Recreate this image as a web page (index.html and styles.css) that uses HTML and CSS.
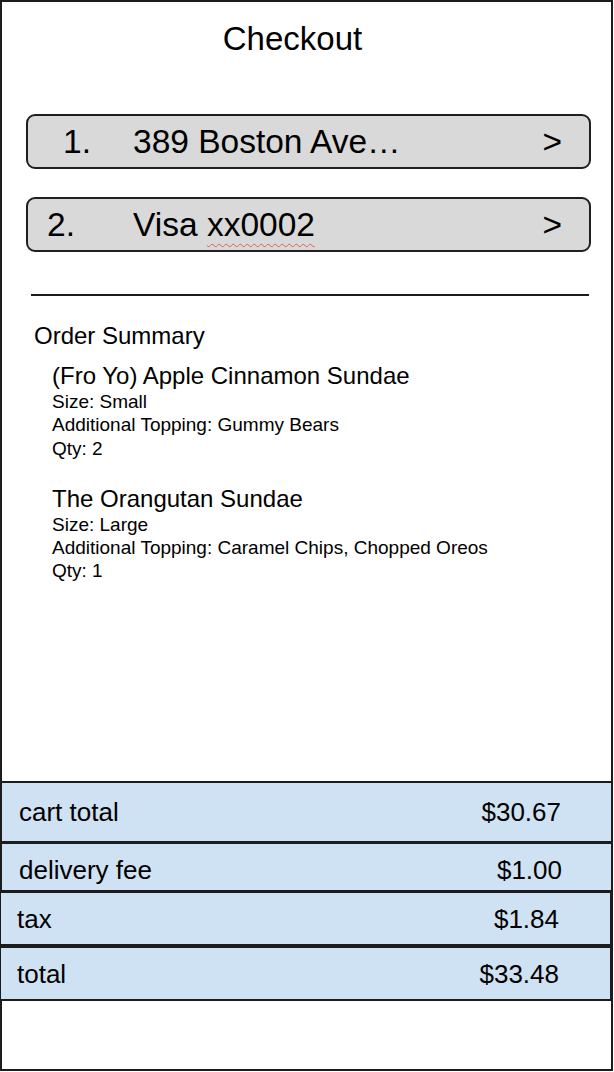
FILE: index.html
```html
<!DOCTYPE html>
<html lang="en">
<head>
<meta charset="utf-8">
<title>Checkout</title>
<link rel="stylesheet" href="styles.css">
</head>
<body>
<div class="frame">
  <h1 class="title">Checkout</h1>

  <div class="opt">
    <span class="num">1.</span>
    <span class="label">389 Boston Ave…</span>
    <span class="chev">&gt;</span>
  </div>
  <div class="opt opt-second">
    <span class="num num-alt">2.</span>
    <span class="label">Visa <span class="spell">xx0002</span></span>
    <span class="chev">&gt;</span>
  </div>

  <div class="rule"></div>

  <div class="summary-head">Order Summary</div>

  <div class="item">
    <div class="item-name">(Fro Yo) Apple Cinnamon Sundae</div>
    <div class="item-line">Size: Small</div>
    <div class="item-line">Additional Topping: Gummy Bears</div>
    <div class="item-line">Qty: 2</div>
  </div>
  <div class="item item-next">
    <div class="item-name">The Orangutan Sundae</div>
    <div class="item-line">Size: Large</div>
    <div class="item-line">Additional Topping: Caramel Chips, Chopped Oreos</div>
    <div class="item-line">Qty: 1</div>
  </div>

  <div class="totals">
    <div class="row row-cart"><span>cart total</span><span>$30.67</span></div>
    <div class="row row-fee"><span>delivery fee</span><span>$1.00</span></div>
    <div class="row row-tax"><span>tax</span><span>$1.84</span></div>
    <div class="row row-total"><span>total</span><span>$33.48</span></div>
  </div>
</div>
</body>
</html>
```

FILE: styles.css
```css
html, body {
  margin: 0;
  padding: 0;
  background: #ffffff;
}

body {
  font-family: "Liberation Sans", Arial, sans-serif;
  color: #000;
}

.frame {
  box-sizing: border-box;
  width: 613px;
  height: 1071px;
  border: 2px solid #1c1c1c;
  display: flex;
  flex-direction: column;
}

.title {
  margin: 17px 0 0 0;
  padding-right: 28px;
  font-weight: normal;
  font-size: 33px;
  line-height: 40px;
  text-align: center;
}

.opt {
  box-sizing: border-box;
  margin: 55px 20px 0 24px;
  height: 55px;
  border: 2px solid #1f1f1f;
  border-radius: 9px;
  background: #d9d9d9;
  display: flex;
  align-items: center;
  font-size: 33.5px;
  line-height: 38px;
}

.opt-second {
  margin-top: 28px;
}

.num {
  box-sizing: border-box;
  width: 105px;
  padding-left: 35px;
  flex: none;
}

.num-alt {
  padding-left: 19px;
}

.label {
  flex: 1;
  white-space: nowrap;
}

.spell {
  text-decoration: underline wavy #e25b5b;
  text-decoration-thickness: 1px;
  text-underline-offset: 7px;
}

.chev {
  flex: none;
  margin-right: 27px;
}

.rule {
  margin: 42px 22px 0 29px;
  height: 2px;
  background: #1c1c1c;
}

.summary-head {
  margin: 26px 0 0 32px;
  font-size: 24px;
  line-height: 28px;
}

.item {
  margin: 12px 0 0 50px;
}

.item-next {
  margin-top: 25px;
}

.item-name {
  font-size: 24px;
  line-height: 28px;
}

.item-line {
  font-size: 19px;
  line-height: 23.3px;
}

.totals {
  margin: auto -2px 68px -2px;
  display: flex;
  flex-direction: column;
}

.row {
  box-sizing: border-box;
  display: flex;
  justify-content: space-between;
  align-items: center;
  background: #cfe2f3;
  border: 2px solid #1c1c1c;
  font-size: 26px;
  line-height: 30px;
  padding: 0 50px 0 17px;
}

.row-cart {
  height: 62px;
}

.row-fee {
  height: 50px;
  margin-top: -1px;
  padding-top: 6px;
  padding-right: 49px;
}

.row-tax {
  height: 55px;
  margin-top: -1px;
  margin-right: 1px;
  margin-left: -1px;
  padding-left: 16px;
  padding-right: 51px;
}

.row-total {
  height: 55px;
  margin-top: 0;
  margin-right: 1px;
  margin-left: -1px;
  padding-left: 16px;
  padding-right: 51px;
}
```
